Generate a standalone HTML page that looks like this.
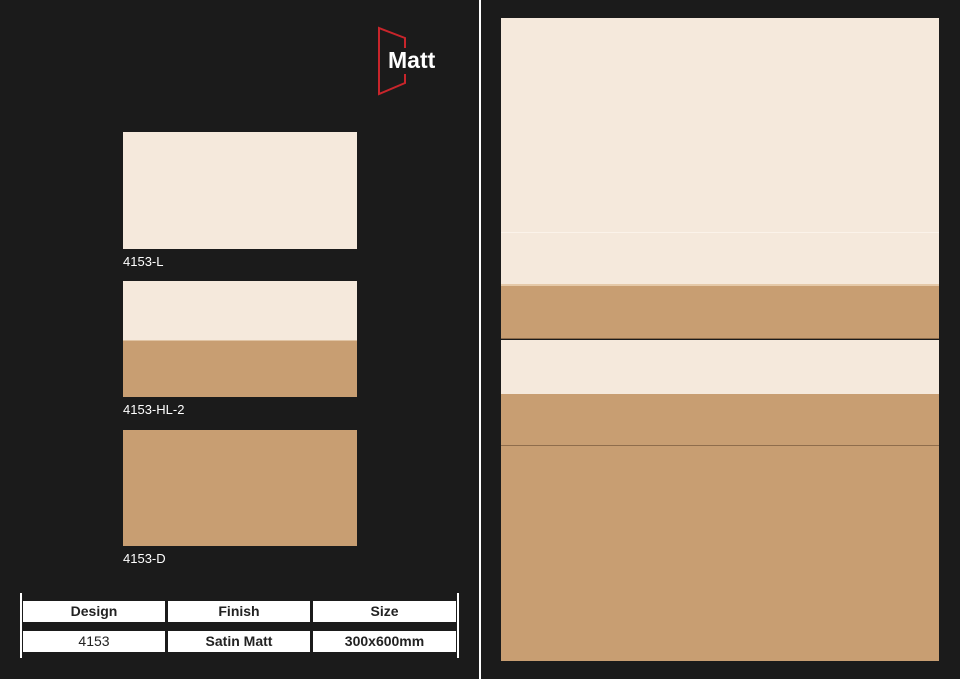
<!DOCTYPE html>
<html><head><meta charset="utf-8"><style>
body{margin:0;width:960px;height:679px;background:#1b1b1b;position:relative;overflow:hidden;font-family:"Liberation Sans",sans-serif}
.a{position:absolute}
.l{background:#f5e9dc}
.d{background:#c89e72}
.lab{position:absolute;color:#fff;font-size:13px;left:123px}
.cell{position:absolute;background:#fff;color:#222;font-size:14px;font-weight:bold;text-align:center;height:21px;line-height:21px}
</style></head><body>
<svg class="a" style="left:370px;top:22px" width="80" height="80" viewBox="0 0 80 80">
<path d="M9 6 L35 16 L35 61 L9 72 Z" fill="none" stroke="#c8252b" stroke-width="2"/>
<rect x="15" y="26" width="56" height="26" fill="#1b1b1b"/>
</svg>
<div class="a" style="left:388px;top:47px;color:#fff;font-weight:bold;font-size:23px">Matt</div>

<div class="a l" style="left:123px;top:132px;width:234px;height:117px"></div>
<div class="lab" style="top:254px">4153-L</div>
<div class="a l" style="left:123px;top:281px;width:234px;height:59px"></div>
<div class="a" style="left:123px;top:340px;width:234px;height:1px;background:#e0c3a3"></div>
<div class="a d" style="left:123px;top:341px;width:234px;height:56px"></div>
<div class="lab" style="top:402px">4153-HL-2</div>
<div class="a d" style="left:123px;top:430px;width:234px;height:116px"></div>
<div class="lab" style="top:551px">4153-D</div>

<div class="a" style="left:20px;top:593px;width:2px;height:65px;background:#fff"></div>
<div class="a" style="left:457px;top:593px;width:2px;height:65px;background:#fff"></div>
<div class="cell" style="left:23px;top:601px;width:142px">Design</div>
<div class="cell" style="left:168px;top:601px;width:142px">Finish</div>
<div class="cell" style="left:313px;top:601px;width:143px">Size</div>
<div class="cell" style="left:23px;top:631px;width:142px;font-weight:normal">4153</div>
<div class="cell" style="left:168px;top:631px;width:142px">Satin Matt</div>
<div class="cell" style="left:313px;top:631px;width:143px">300x600mm</div>

<div class="a" style="left:479px;top:0;width:2px;height:679px;background:#fff"></div>

<div class="a l" style="left:501px;top:18px;width:438px;height:268px"></div>
<div class="a" style="left:501px;top:232px;width:438px;height:1px;background:#fbf3ea"></div>
<div class="a" style="left:501px;top:284px;width:438px;height:2px;background:#e5c9a8"></div>
<div class="a d" style="left:501px;top:286px;width:438px;height:53px"></div>
<div class="a" style="left:501px;top:338px;width:438px;height:1px;background:#8a6a4a"></div>
<div class="a l" style="left:501px;top:340px;width:438px;height:54px"></div>
<div class="a d" style="left:501px;top:394px;width:438px;height:267px"></div>
<div class="a" style="left:501px;top:445px;width:438px;height:1px;background:#8f6d4c"></div>
</body></html>
